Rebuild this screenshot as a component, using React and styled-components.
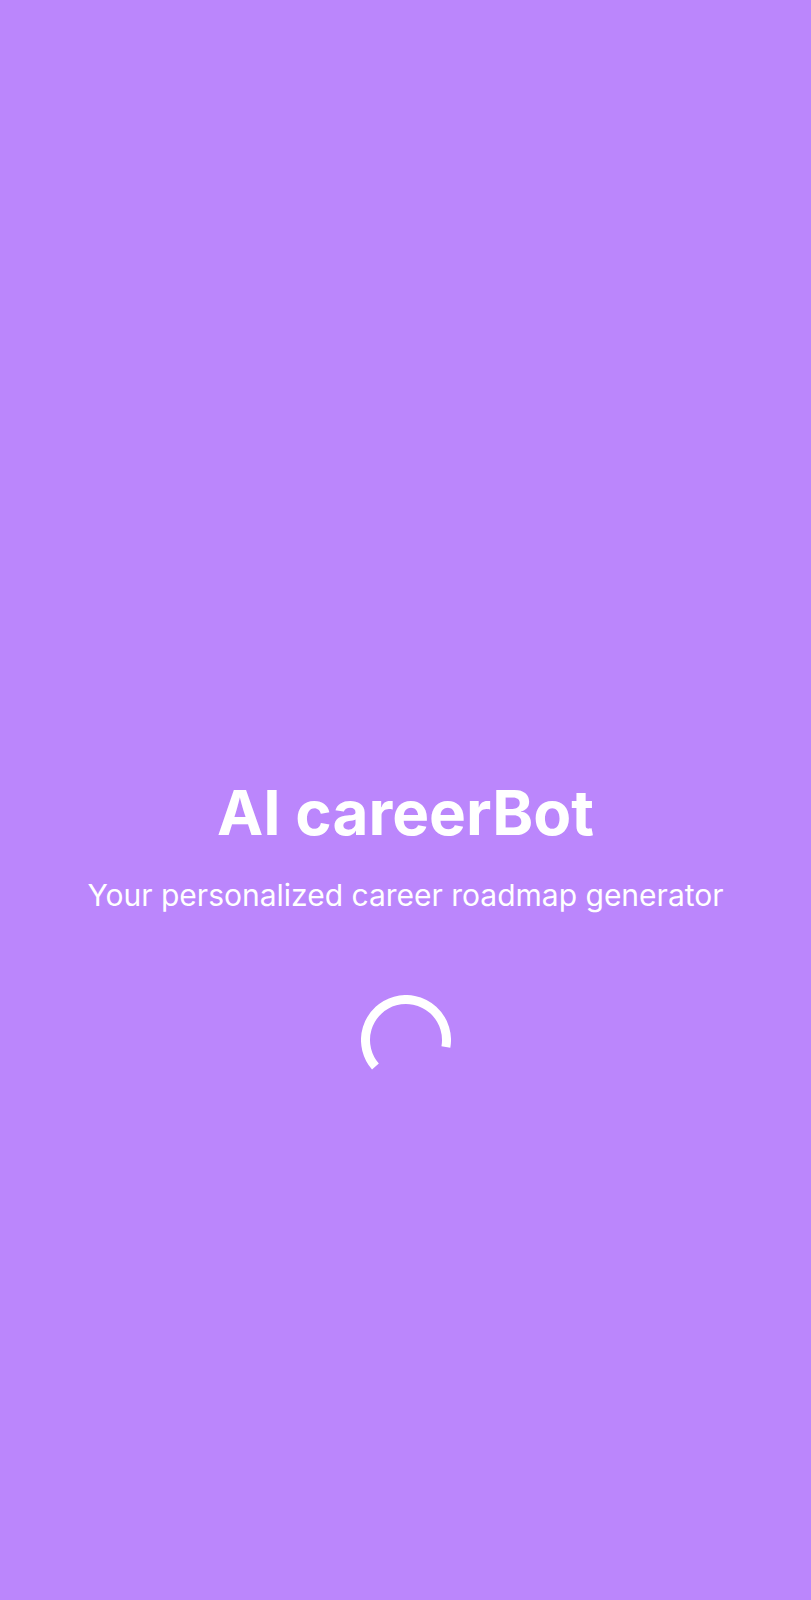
import styled, { createGlobalStyle } from "styled-components";

const GlobalStyle = createGlobalStyle`
    html, body {
        margin: 0;
        padding: 0;
        background: #bb86fc;
    }
    * {
        box-sizing: border-box;
    }
`;

function Spinner() {
    // static arc, gap at the lower right
    const r = 40.5;
    const cx = 45;
    const cy = 45;
    const start = (139 * Math.PI) / 180;
    const end = (370 * Math.PI) / 180;
    const x1 = cx + r * Math.cos(start);
    const y1 = cy + r * Math.sin(start);
    const x2 = cx + r * Math.cos(end);
    const y2 = cy + r * Math.sin(end);

    return (
        <SpinnerSvg width="90" height="90" viewBox="0 0 90 90">
            <path
                d={`M ${x1} ${y1} A ${r} ${r} 0 1 1 ${x2} ${y2}`}
                fill="none"
                stroke="#ffffff"
                strokeWidth="9"
            />
        </SpinnerSvg>
    );
}

export default function App() {
    return (
        <>
            <GlobalStyle />
            <SplashStyles>
                <Title>AI careerBot</Title>
                <Subtitle>Your personalized career roadmap generator</Subtitle>
                <Spinner />
            </SplashStyles>
        </>
    );
}

const SplashStyles = styled.main`
    display: flex;
    flex-direction: column;
    align-items: center;
    min-height: 1600px;
    padding-top: 777px;
    background: #bb86fc;
    font-family: Inter, "Noto Sans", sans-serif;
    color: #ffffff;
    text-align: center;
`;

const Title = styled.h1`
    margin: 0;
    font-size: 62px;
    font-weight: 700;
    line-height: 72px;
    letter-spacing: 0;
`;

const Subtitle = styled.p`
    margin: 26px 0 0;
    font-size: 30px;
    font-weight: 400;
    line-height: 40px;
`;

const SpinnerSvg = styled.svg`
    display: block;
    margin-top: 80px;
`;
